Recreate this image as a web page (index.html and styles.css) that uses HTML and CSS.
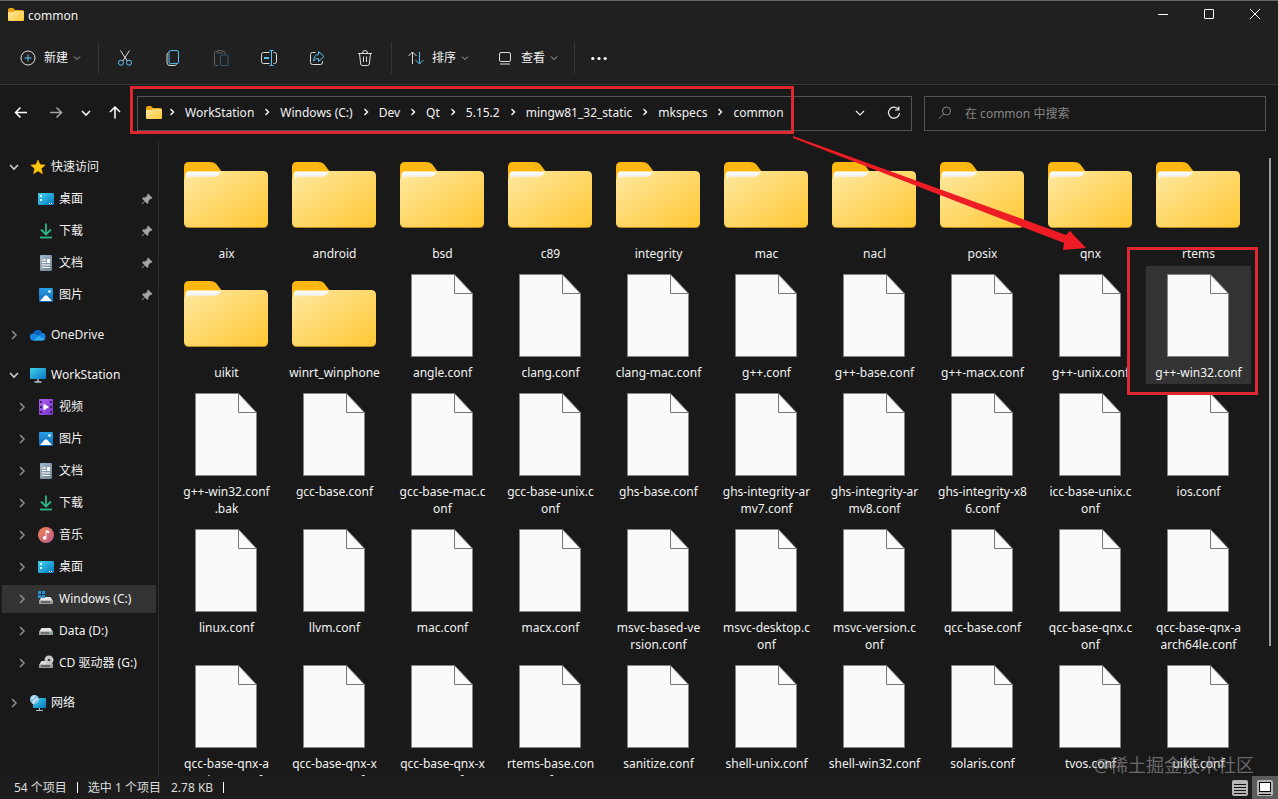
FILE: index.html
```html
<!DOCTYPE html>
<html lang="zh-CN">
<head>
<meta charset="utf-8">
<title>common</title>
<link rel="stylesheet" href="styles.css">
</head>
<body>
<svg class="defs" aria-hidden="true">
  <defs>
    <linearGradient id="gFolder" x1="0" y1="0" x2="1" y2="1"><stop offset="0" stop-color="#ffe8a0"/><stop offset="1" stop-color="#ffc834"/></linearGradient>
    <linearGradient id="gPaper" x1="0" y1="0" x2="0" y2="1"><stop offset="0" stop-color="#fff"/><stop offset=".5" stop-color="#f3f3f3"/><stop offset="1" stop-color="#ffe7a0"/></linearGradient>
    <linearGradient id="gDesk" x1="0" y1="0" x2="1" y2="1"><stop offset="0" stop-color="#3fd3e8"/><stop offset="1" stop-color="#0a75c4"/></linearGradient>
    <linearGradient id="gDoc" x1="0" y1="0" x2="1" y2="1"><stop offset="0" stop-color="#a9bac8"/><stop offset="1" stop-color="#6d8195"/></linearGradient>
    <linearGradient id="gPic" x1="0" y1="0" x2="0" y2="1"><stop offset="0" stop-color="#2b9fe6"/><stop offset="1" stop-color="#0b66b4"/></linearGradient>
    <linearGradient id="gVid" x1="0" y1="0" x2="1" y2="1"><stop offset="0" stop-color="#b35ff2"/><stop offset="1" stop-color="#7334c4"/></linearGradient>
    <linearGradient id="gMus" x1="0" y1="0" x2="1" y2="1"><stop offset="0" stop-color="#f0854c"/><stop offset="1" stop-color="#b9578f"/></linearGradient>
    <symbol id="folder" viewBox="0 0 96 96">
      <path d="M6 18q0-5 5-5h21q4 0 6 2l6 8v20H6z" fill="#fdb713"/>
      <path d="M6 72V38h84v36q0 5-5 5H11q-5 0-5-5z" fill="#b98a24"/>
      <path d="M6 34V27q0-5 5-5h74q5 0 5 5v46q0 5-5 5H11q-5 0-5-5z" fill="url(#gFolder)"/>
      <path d="M6 22h5q-4 0-4 5l-1 5z" fill="#fdb713"/>
      <path d="M8 30v-4q0-3 3-3h32q-3 5-8 5H13q-3 0-5 2z" fill="url(#gPaper)"/>
    </symbol>
    <symbol id="file" viewBox="0 0 96 96">
      <path d="M17.500 6.500H60.500L78.500 25.500V88.500H17.500z" fill="#fafafa" stroke="#858585"/>
      <path d="M60.500 6.500V25.500H78.500" fill="none" stroke="#777"/>
    </symbol>
    <symbol id="sfolder" viewBox="0 0 16 16">
      <path d="M0 3q0-2 2-2h3l2 2h7q2 0 2 2v3H0z" fill="#eaa312"/>
      <path d="M0 6q0-1 1-1h4l2-1h8q1 0 1 1v8q0 1-1 1H1q-1 0-1-1z" fill="url(#gFolder)"/>
    </symbol>
    <symbol id="right" viewBox="0 0 10 10"><path d="M3 1 7 5 3 9" fill="none" stroke="currentColor" stroke-width="1.600"/></symbol>
    <symbol id="down" viewBox="0 0 10 10"><path d="M1 3 5 7 9 3" fill="none" stroke="currentColor" stroke-width="1.600"/></symbol>
    <symbol id="thin" viewBox="0 0 10 10"><path d="M2 3.500 5 6.500l3-3" fill="none" stroke="currentColor"/></symbol>
    <symbol id="crumb" viewBox="0 0 10 10"><path d="M3.500 2 6.500 5l-3 3" fill="none" stroke="currentColor" stroke-width="1.500"/></symbol>
    <symbol id="pin" viewBox="0 0 12 12"><path d="M7 .5 11.500 5l-1 1-1-.3L7.500 8l-.2 2-1 1-2.500-2.500L1 11.500.5 11l3-3L1 5.600l1-1 2.300-.2L6.500 2.500 6 1.500z" fill="#a3a3a3"/></symbol>
    <symbol id="star" viewBox="0 0 16 16"><path d="m8 .8 2.100 4.800 5.200.5-3.900 3.500 1.100 5.200L8 12.100l-4.500 2.700 1.100-5.200L.7 6.100l5.200-.5z" fill="#ffc80e" stroke="#f0a30a" stroke-width=".5"/></symbol>
    <symbol id="desk" viewBox="0 0 16 16"><rect y="2" width="16" height="12" rx="1" fill="url(#gDesk)"/><path d="M2 4h2v2H2zM2 8h2v2H2z" fill="#dffaff"/><path d="M11 12h1v1h-1zM13 12h1v1h-1z" fill="#fff"/></symbol>
    <symbol id="dl" viewBox="0 0 16 16"><path d="M8 .5V11M3 6.500l5 5 5-5" fill="none" stroke="#2bb58f" stroke-width="1.800"/><path d="M2 14.500h12" stroke="#2bb58f" stroke-width="1.800"/></symbol>
    <symbol id="doc" viewBox="0 0 16 16"><rect x="2" width="12" height="16" rx="1" fill="url(#gDoc)"/><path d="M4 5h4M4 7.500h4M4 10h8M4 12.500h8" stroke="#fff"/><path d="M9 4h3v4H9z" fill="#fff"/></symbol>
    <symbol id="pic" viewBox="0 0 16 16"><rect x="1" y="1" width="14" height="14" rx="1" fill="url(#gPic)"/><path d="m2 14 4.500-5q1.500-1.400 3 0l4.500 5z" fill="#fff"/><circle cx="11.500" cy="4.500" r="1.300" fill="#fff"/></symbol>
    <symbol id="vid" viewBox="0 0 16 16"><rect x="1" width="14" height="16" rx="1" fill="url(#gVid)"/><path d="M5.500 4.500v7L11 8z" fill="#fff"/><path d="M2 3h2M2 8h2M2 13h2M12 3h2M12 8h2M12 13h2" stroke="#3e176e" stroke-width="2"/></symbol>
    <symbol id="mus" viewBox="0 0 16 16"><circle cx="8" cy="8" r="8" fill="url(#gMus)"/><path d="M8 10.500V3.500l3 1v1.500L8 5" fill="#fff" stroke="#fff" stroke-width=".8"/><circle cx="6.700" cy="10.800" r="1.900" fill="#fff"/></symbol>
    <symbol id="cloud" viewBox="0 0 16 16"><path d="M3.500 13.500a3.500 3.500 0 0 1-.3-7Q4.500 3 8 3q3 0 4.200 3a3.800 3.800 0 0 1 .3 7.500z" fill="#1486dc"/><path d="M3.200 6.500Q4.500 3 8 3q3 0 4.200 3l-4 2.500z" fill="#0860b8"/><path d="M3 13.400 9 9l5.800 3.200q-1 1.300-2.500 1.300H4z" fill="#36a9f2"/></symbol>
    <symbol id="pc" viewBox="0 0 16 16"><rect y="1" width="16" height="11" rx="1" fill="url(#gDesk)"/><path d="M8 12v3M4.500 15h7" stroke="#b8c3c9" stroke-width="1.400"/></symbol>
    <symbol id="drive" viewBox="0 0 16 16"><path d="M1 9l2.500-4h9L15 9z" fill="#e3e3e3"/><path d="M1 8.500h14V12H1z" fill="#999"/><path d="M3 10h8" stroke="#444"/><path d="M12 10h2" stroke="#62d77b"/></symbol>
    <symbol id="cdrive" viewBox="0 0 16 16"><path d="M1 10l2.500-4h9L15 10z" fill="#e3e3e3"/><path d="M1 9.500h14V13H1z" fill="#999"/><path d="M3 11h9" stroke="#333"/><path d="M0 0h3v3H0zM4 0h3v3H4zM0 4h3v3H0zM4 4h3v3H4z" fill="#1e93dd"/></symbol>
    <symbol id="cd" viewBox="0 0 16 16"><path d="M1 10l2.500-4h9L15 10z" fill="#ddd"/><circle cx="11" cy="5" r="4.500" fill="#c9c9c9"/><circle cx="11" cy="5" r="1.300" fill="#444"/><path d="M1 9.500h14V13H1z" fill="#999"/><path d="M3 11h9" stroke="#333"/></symbol>
    <symbol id="net" viewBox="0 0 16 16"><rect x="3" y="3" width="13" height="10" rx="1" fill="url(#gDesk)"/><path d="M9.500 13v2.500M6 15.500h7" stroke="#b8c3c9"/><circle cx="4.500" cy="4.500" r="4.500" fill="#8bc7e5"/><path d="M1 3q3 1 3-3M3 9q0-4 5-5" fill="none" stroke="#e0f4fc" stroke-width="1.200"/></symbol>
  </defs>
</svg>

<div class="window">
  <header class="titlebar">
    <svg class="i16"><use href="#sfolder"/></svg>
    <h1 class="title">common</h1>
    <div class="controls">
      <button aria-label="最小化"><svg class="i16" viewBox="0 0 16 16"><path d="M3 7.500h10"/></svg></button>
      <button aria-label="最大化"><svg class="i16" viewBox="0 0 16 16"><rect x="3.500" y="2.500" width="9" height="9" rx=".5"/></svg></button>
      <button aria-label="关闭"><svg class="i16" viewBox="0 0 16 16"><path d="m3 2 10 10M13 2 3 12"/></svg></button>
    </div>
  </header>

  <div class="toolbar">
    <button class="tool tool-new"><svg class="i16" viewBox="0 0 16 16"><circle cx="8" cy="8" r="7"/><path class="blue" d="M8 4.500v7M4.500 8h7"/></svg><span>新建</span><svg class="i10"><use href="#thin"/></svg></button>
    <i class="sep"></i>
    <div class="tools">
      <button class="tool" aria-label="剪切"><svg class="i16" viewBox="0 0 16 16"><path d="M3.500.5 10.300 11M12.500.5 5.700 11"/><circle class="blue" cx="4" cy="12.700" r="2.500"/><circle class="blue" cx="12" cy="12.700" r="2.500"/></svg></button>
      <button class="tool" aria-label="复制"><svg class="i16" viewBox="0 0 16 16"><path d="M3.500 2.500Q2 3 2 5v7.500q0 3 3 3h4.500q1.500 0 2-1.200"/><rect class="blue" x="4" y=".6" width="9.500" height="13" rx="1.500"/></svg></button>
      <button class="tool dim" aria-label="粘贴"><svg class="i16" viewBox="0 0 16 16"><path d="M5 15.500H2.500q-1 0-1-1v-12q0-1 1-1H4M9.500 1.500h1.500q1 0 1 1V4"/><rect x="4" y=".5" width="5.500" height="2.500" rx="1"/><rect class="blue" x="7.500" y="5" width="7.500" height="10.500" rx="1"/></svg></button>
      <button class="tool" aria-label="重命名"><svg class="i16" viewBox="0 0 16 16"><path d="M8.500 2.500H2.500Q.5 2.500.5 4.500v7q0 2 2 2h6M12.500 2.500h1q2 0 2 2v7q0 2-2 2h-1"/><path class="blue" d="M10.500.5v15M8.500.5h4M8.500 15.500h4"/><path class="blue thick" d="M3 8h5"/></svg></button>
      <button class="tool" aria-label="共享"><svg class="i16" viewBox="0 0 16 16"><path d="M6.500 2.500h-3q-2 0-2 2v8q0 2 2 2h8q2 0 2-2V11"/><path class="blue" d="M9.500 1.500 15 6.500l-5.500 5V8.500Q6 8.500 4.500 11 5 4.700 9.500 4.500z"/></svg></button>
      <button class="tool" aria-label="删除"><svg class="i16" viewBox="0 0 16 16"><path d="M1 3.500h14M5.500 3q0-2.500 2.500-2.500T10.500 3M2.500 3.500l1.200 10.500q.2 1.500 1.500 1.500h5.600q1.300 0 1.500-1.500L13.500 3.500M6.500 6.500v5.500M9.500 6.500v5.500"/></svg></button>
    </div>
    <i class="sep"></i>
    <div class="menus">
      <button class="tool"><svg class="i16" viewBox="0 0 16 16"><path d="M4.500 14V2M.5 6l4-4 4 4"/><path class="blue" d="M11.500 2v12M7.500 10l4 4 4-4"/></svg><span>排序</span><svg class="i10"><use href="#thin"/></svg></button>
      <button class="tool"><svg class="i16" viewBox="0 0 16 16"><rect x="2.500" y="2.500" width="11" height="9" rx="1.500"/><path d="M3 14h10"/></svg><span>查看</span><svg class="i10"><use href="#thin"/></svg></button>
    </div>
    <i class="sep"></i>
    <button class="tool more" aria-label="查看更多"><svg class="i16" viewBox="0 0 16 16"><circle cx="1.800" cy="8.500" r="1.600"/><circle cx="8" cy="8.500" r="1.600"/><circle cx="14.200" cy="8.500" r="1.600"/></svg></button>
  </div>

  <div class="navbar">
    <nav class="history">
      <button aria-label="返回"><svg class="i16" viewBox="0 0 16 16"><path d="M14 7.500H2.500M7.500 2.500l-5 5 5 5"/></svg></button>
      <button class="faded" aria-label="前进"><svg class="i16" viewBox="0 0 16 16"><path d="M2 7.500h11.500M8.500 2.500l5 5-5 5"/></svg></button>
      <button class="recent" aria-label="最近"><svg class="i10"><use href="#down"/></svg></button>
      <button aria-label="向上"><svg class="i16" viewBox="0 0 16 16"><path d="M8 13.500V2M3 7l5-5 5 5"/></svg></button>
    </nav>
    <div class="address">
      <svg class="i16"><use href="#sfolder"/></svg>
      <ol class="crumbs">
        <li><svg class="i10"><use href="#crumb"/></svg><a href="#">WorkStation</a></li>
        <li><svg class="i10"><use href="#crumb"/></svg><a href="#">Windows (C:)</a></li>
        <li><svg class="i10"><use href="#crumb"/></svg><a href="#">Dev</a></li>
        <li><svg class="i10"><use href="#crumb"/></svg><a href="#">Qt</a></li>
        <li><svg class="i10"><use href="#crumb"/></svg><a href="#">5.15.2</a></li>
        <li><svg class="i10"><use href="#crumb"/></svg><a href="#">mingw81_32_static</a></li>
        <li><svg class="i10"><use href="#crumb"/></svg><a href="#">mkspecs</a></li>
        <li><svg class="i10"><use href="#crumb"/></svg><a href="#">common</a></li>
      </ol>
      <button aria-label="历史位置"><svg class="i10" viewBox="0 0 10 10"><path d="M1 3l4 4 4-4"/></svg></button>
      <button aria-label="刷新"><svg class="i16" viewBox="0 0 16 16"><path d="M12.500 4.500A5.500 5.500 0 1 0 13.500 8M12.800 1.500v3.500H9"/></svg></button>
    </div>
    <label class="search"><svg class="i16" viewBox="0 0 16 16"><circle cx="9.500" cy="6" r="4"/><path d="M6.500 9 2 13.500"/></svg><input type="search" aria-label="搜索" placeholder="在 common 中搜索"></label>
  </div>

  <div class="body">
    <aside class="sidebar">
      <ul class="tree">
        <li><button class="row"><svg class="i10 open"><use href="#down"/></svg><svg class="i16"><use href="#star"/></svg><span>快速访问</span></button></li>
        <li><button class="row sub"><svg class="i16"><use href="#desk"/></svg><span>桌面</span><svg class="pin"><use href="#pin"/></svg></button></li>
        <li><button class="row sub"><svg class="i16"><use href="#dl"/></svg><span>下载</span><svg class="pin"><use href="#pin"/></svg></button></li>
        <li><button class="row sub"><svg class="i16"><use href="#doc"/></svg><span>文档</span><svg class="pin"><use href="#pin"/></svg></button></li>
        <li><button class="row sub"><svg class="i16"><use href="#pic"/></svg><span>图片</span><svg class="pin"><use href="#pin"/></svg></button></li>
      </ul>
      <ul class="tree">
        <li><button class="row"><svg class="i10"><use href="#right"/></svg><svg class="i16"><use href="#cloud"/></svg><span>OneDrive</span></button></li>
      </ul>
      <ul class="tree">
        <li><button class="row"><svg class="i10 open"><use href="#down"/></svg><svg class="i16"><use href="#pc"/></svg><span>WorkStation</span></button></li>
        <li><button class="row child"><svg class="i10"><use href="#right"/></svg><svg class="i16"><use href="#vid"/></svg><span>视频</span></button></li>
        <li><button class="row child"><svg class="i10"><use href="#right"/></svg><svg class="i16"><use href="#pic"/></svg><span>图片</span></button></li>
        <li><button class="row child"><svg class="i10"><use href="#right"/></svg><svg class="i16"><use href="#doc"/></svg><span>文档</span></button></li>
        <li><button class="row child"><svg class="i10"><use href="#right"/></svg><svg class="i16"><use href="#dl"/></svg><span>下载</span></button></li>
        <li><button class="row child"><svg class="i10"><use href="#right"/></svg><svg class="i16"><use href="#mus"/></svg><span>音乐</span></button></li>
        <li><button class="row child"><svg class="i10"><use href="#right"/></svg><svg class="i16"><use href="#desk"/></svg><span>桌面</span></button></li>
        <li><button class="row child active"><svg class="i10"><use href="#right"/></svg><svg class="i16"><use href="#cdrive"/></svg><span>Windows (C:)</span></button></li>
        <li><button class="row child"><svg class="i10"><use href="#right"/></svg><svg class="i16"><use href="#drive"/></svg><span>Data (D:)</span></button></li>
        <li><button class="row child"><svg class="i10"><use href="#right"/></svg><svg class="i16"><use href="#cd"/></svg><span>CD 驱动器 (G:)</span></button></li>
      </ul>
      <ul class="tree">
        <li><button class="row"><svg class="i10"><use href="#right"/></svg><svg class="i16"><use href="#net"/></svg><span>网络</span></button></li>
      </ul>
    </aside>

    <main class="files">
      <button class="item"><svg><use href="#folder"/></svg><span>aix</span></button>
      <button class="item"><svg><use href="#folder"/></svg><span>android</span></button>
      <button class="item"><svg><use href="#folder"/></svg><span>bsd</span></button>
      <button class="item"><svg><use href="#folder"/></svg><span>c89</span></button>
      <button class="item"><svg><use href="#folder"/></svg><span>integrity</span></button>
      <button class="item"><svg><use href="#folder"/></svg><span>mac</span></button>
      <button class="item"><svg><use href="#folder"/></svg><span>nacl</span></button>
      <button class="item"><svg><use href="#folder"/></svg><span>posix</span></button>
      <button class="item"><svg><use href="#folder"/></svg><span>qnx</span></button>
      <button class="item"><svg><use href="#folder"/></svg><span>rtems</span></button>
      <button class="item"><svg><use href="#folder"/></svg><span>uikit</span></button>
      <button class="item"><svg><use href="#folder"/></svg><span>winrt_winphone</span></button>
      <button class="item"><svg><use href="#file"/></svg><span>angle.conf</span></button>
      <button class="item"><svg><use href="#file"/></svg><span>clang.conf</span></button>
      <button class="item"><svg><use href="#file"/></svg><span>clang-mac.conf</span></button>
      <button class="item"><svg><use href="#file"/></svg><span>g++.conf</span></button>
      <button class="item"><svg><use href="#file"/></svg><span>g++-base.conf</span></button>
      <button class="item"><svg><use href="#file"/></svg><span>g++-macx.conf</span></button>
      <button class="item"><svg><use href="#file"/></svg><span>g++-unix.conf</span></button>
      <button class="item selected"><svg><use href="#file"/></svg><span>g++-win32.conf</span></button>
      <button class="item"><svg><use href="#file"/></svg><span>g++-win32.conf<br>.bak</span></button>
      <button class="item"><svg><use href="#file"/></svg><span>gcc-base.conf</span></button>
      <button class="item"><svg><use href="#file"/></svg><span>gcc-base-mac.c<br>onf</span></button>
      <button class="item"><svg><use href="#file"/></svg><span>gcc-base-unix.c<br>onf</span></button>
      <button class="item"><svg><use href="#file"/></svg><span>ghs-base.conf</span></button>
      <button class="item"><svg><use href="#file"/></svg><span>ghs-integrity-ar<br>mv7.conf</span></button>
      <button class="item"><svg><use href="#file"/></svg><span>ghs-integrity-ar<br>mv8.conf</span></button>
      <button class="item"><svg><use href="#file"/></svg><span>ghs-integrity-x8<br>6.conf</span></button>
      <button class="item"><svg><use href="#file"/></svg><span>icc-base-unix.c<br>onf</span></button>
      <button class="item"><svg><use href="#file"/></svg><span>ios.conf</span></button>
      <button class="item"><svg><use href="#file"/></svg><span>linux.conf</span></button>
      <button class="item"><svg><use href="#file"/></svg><span>llvm.conf</span></button>
      <button class="item"><svg><use href="#file"/></svg><span>mac.conf</span></button>
      <button class="item"><svg><use href="#file"/></svg><span>macx.conf</span></button>
      <button class="item"><svg><use href="#file"/></svg><span>msvc-based-ve<br>rsion.conf</span></button>
      <button class="item"><svg><use href="#file"/></svg><span>msvc-desktop.c<br>onf</span></button>
      <button class="item"><svg><use href="#file"/></svg><span>msvc-version.c<br>onf</span></button>
      <button class="item"><svg><use href="#file"/></svg><span>qcc-base.conf</span></button>
      <button class="item"><svg><use href="#file"/></svg><span>qcc-base-qnx.c<br>onf</span></button>
      <button class="item"><svg><use href="#file"/></svg><span>qcc-base-qnx-a<br>arch64le.conf</span></button>
      <button class="item"><svg><use href="#file"/></svg><span>qcc-base-qnx-a<br>rmle-v7.conf</span></button>
      <button class="item"><svg><use href="#file"/></svg><span>qcc-base-qnx-x<br>86-64.conf</span></button>
      <button class="item"><svg><use href="#file"/></svg><span>qcc-base-qnx-x<br>86.conf</span></button>
      <button class="item"><svg><use href="#file"/></svg><span>rtems-base.con<br>f</span></button>
      <button class="item"><svg><use href="#file"/></svg><span>sanitize.conf</span></button>
      <button class="item"><svg><use href="#file"/></svg><span>shell-unix.conf</span></button>
      <button class="item"><svg><use href="#file"/></svg><span>shell-win32.conf</span></button>
      <button class="item"><svg><use href="#file"/></svg><span>solaris.conf</span></button>
      <button class="item"><svg><use href="#file"/></svg><span>tvos.conf</span></button>
      <button class="item"><svg><use href="#file"/></svg><span>uikit.conf</span></button>
    </main>
    <div class="scroll"><div class="thumb"></div></div>
  </div>

  <footer class="status">
    <span>54 个项目</span><i class="bar"></i><span>选中 1 个项目</span><span class="size">2.78 KB</span><i class="bar"></i>
    <div class="views">
      <button aria-label="详细信息"><svg class="i16" viewBox="0 0 16 16"><rect width="16" height="16" rx="2" fill="#b5b5b5"/><path d="M2 4.500h12M2 7.500h12M2 10.500h12M2 13.500h12" stroke="#111"/></svg></button>
      <button class="on" aria-label="大图标"><svg class="i16" viewBox="0 0 16 16"><rect width="16" height="16" rx="2" fill="#b5b5b5"/><rect x="2.500" y="2.500" width="11" height="9" fill="#fff" stroke="#000"/><path d="M2 14.500h12" stroke="#000"/></svg></button>
    </div>
  </footer>
</div>

<div class="mark mark-path"></div>
<div class="mark mark-file"></div>
<svg class="arrow" viewBox="0 0 294 116"><path d="M0 0 273 99 277 95 293 112 270 114 271 107 0 2Z" fill="#ee1c25"/></svg>
<div class="watermark">@稀土掘金技术社区</div>
</body>
</html>
```
FILE: styles.css
```css
* { box-sizing: border-box; }

body {
  margin: 0;
  background: #191919;
  color: #f2f2f2;
  font-family: "Noto Sans", "Noto Sans CJK SC", sans-serif;
  font-size: 12px;
  line-height: 17px;
  overflow: hidden;
}

button {
  margin: 0;
  padding: 0;
  border: 0;
  background: none;
  color: inherit;
  font: inherit;
}

ul, ol { margin: 0; padding: 0; list-style: none; }
svg { flex: none; }
a { color: inherit; text-decoration: none; }

.defs { position: absolute; width: 0; height: 0; }
.i16 { width: 16px; height: 16px; }
.i10 { width: 10px; height: 10px; }

.window { display: flex; flex-direction: column; height: 100vh; }

.titlebar {
  display: flex;
  align-items: center;
  height: 31px;
  padding: 0 0 2px 8px;
  border-top: 1px solid #666;
  background: #202020;
}
.title { margin: 0 0 0 4px; font-size: 12px; font-weight: 400; }
.controls { display: flex; margin-left: auto; }
.controls button { display: grid; place-items: center; width: 46px; height: 28px; }
.controls svg { fill: none; stroke: #fff; }

.toolbar {
  display: flex;
  align-items: center;
  height: 54px;
  padding-left: 20px;
  border-bottom: 1px solid #353535;
  background: #202020;
}
.tool { display: flex; align-items: center; justify-content: center; height: 32px; }
.tool svg { fill: none; stroke: #ddd; }
.tool .i10 { color: #aaa; }
.tool .blue { stroke: #5bc3f5; }
.tool .thick { stroke-width: 2; }
.tool span { margin: 0 4px 0 8px; }
.tool-new { width: 78px; justify-content: flex-start; }
.dim { opacity: 0.35; }
.sep { width: 1px; height: 32px; background: #353535; }
.tools { display: flex; gap: 16px; padding: 0 10px; }
.tools .tool { width: 32px; }
.menus { display: flex; gap: 27px; padding: 0 15px 0 16px; }
.more { padding-left: 16px; }
.more svg { fill: #fff; stroke: none; }

.navbar { display: flex; align-items: center; height: 56px; padding-right: 12px; }
.history { display: flex; align-items: center; gap: 19px; width: 137px; padding-left: 13px; }
.history button { display: grid; }
.history svg { fill: none; stroke: #fff; stroke-width: 1.5; }
.history .faded { opacity: 0.6; }
.history .recent { margin: 0 -3px 0 -2px; }
.address {
  display: flex;
  flex: 1;
  align-items: center;
  height: 35px;
  margin-right: 12px;
  padding: 0 9px 0 8px;
  border: 1px solid #535353;
}
.address button { display: grid; margin-left: 21px; }
.address button svg { fill: none; stroke: #eee; stroke-width: 1.2; }
.crumbs { display: flex; flex: 1; padding: 0 0 2px 5px; white-space: nowrap; }
.crumbs li { display: flex; align-items: center; }
.crumbs svg { margin: 0 8px 0 0; }
.crumbs li + li svg { margin-left: 8px; }
.search {
  display: flex;
  flex: 0 0 342px;
  align-items: center;
  height: 35px;
  padding: 0 12px;
  border: 1px solid #535353;
}
.search svg { fill: none; stroke: #858585; }
.search input {
  flex: 1;
  min-width: 0;
  padding: 0 0 0 12px;
  border: 0;
  outline: 0;
  background: none;
  color: #fff;
  font: inherit;
}
.search input::placeholder { color: #858585; opacity: 1; }

.body { display: flex; flex: 1; min-height: 0; }
.sidebar {
  width: 159px;
  padding: 12px 2px 0;
  border-right: 1px solid #2b2b2b;
  overflow: hidden;
}
.tree { display: grid; gap: 4px; margin-bottom: 12px; }
.row { display: flex; align-items: center; width: 100%; height: 28px; padding: 0 3px 0 7px; }
.row span { margin-left: 5px; padding-bottom: 2px; white-space: nowrap; }
.row .i16 { margin-left: 11px; }
.row .i10 { color: #8a8a8a; }
.row .open { color: #ccc; }
.row.child { padding-left: 15px; }
.row.sub { padding-left: 25px; }
.row.active { background: #333; }
.pin { width: 12px; height: 12px; margin-left: auto; }

.files {
  display: grid;
  flex: 1;
  grid-template-columns: repeat(auto-fill, 105px);
  gap: 1px 3px;
  align-content: start;
  padding: 6px 0 0 15px;
  overflow: hidden;
}
.item {
  display: flex;
  flex-direction: column;
  align-items: center;
  padding: 2px 0 3px;
}
.item svg { width: 96px; height: 96px; margin-right: 2px; }
.item span { white-space: nowrap; }
.item.selected { background: #333; }
.scroll { width: 9px; padding-top: 17px; }
.thumb { width: 2px; height: 79%; background: #9a9a9a; }

.status {
  display: flex;
  align-items: center;
  height: 23px;
  padding-left: 14px;
  background: #1c1c1c;
  color: #dcdcdc;
}
.bar { width: 1px; height: 11px; margin: 0 10px; background: #fff; }
.size { margin-left: 10px; }
.views { display: flex; gap: 1px; margin-left: auto; }
.views button { display: grid; place-items: center; width: 26px; height: 23px; }
.views button:first-child { width: 22px; }
.views svg { fill: none; }
.views .on { background: #5c5c5c; }

.mark { position: absolute; border: 3px solid #dc282e; pointer-events: none; }
.mark-path { left: 130px; top: 86px; width: 664px; height: 48px; }
.mark-file { left: 1127px; top: 247px; width: 131px; height: 148px; }
.arrow { position: absolute; left: 793px; top: 136px; width: 294px; height: 116px; pointer-events: none; }
.watermark {
  position: absolute;
  right: 24px;
  bottom: 20px;
  color: rgba(160, 160, 160, 0.6);
  font-size: 18px;
  line-height: 28px;
  pointer-events: none;
}
```
